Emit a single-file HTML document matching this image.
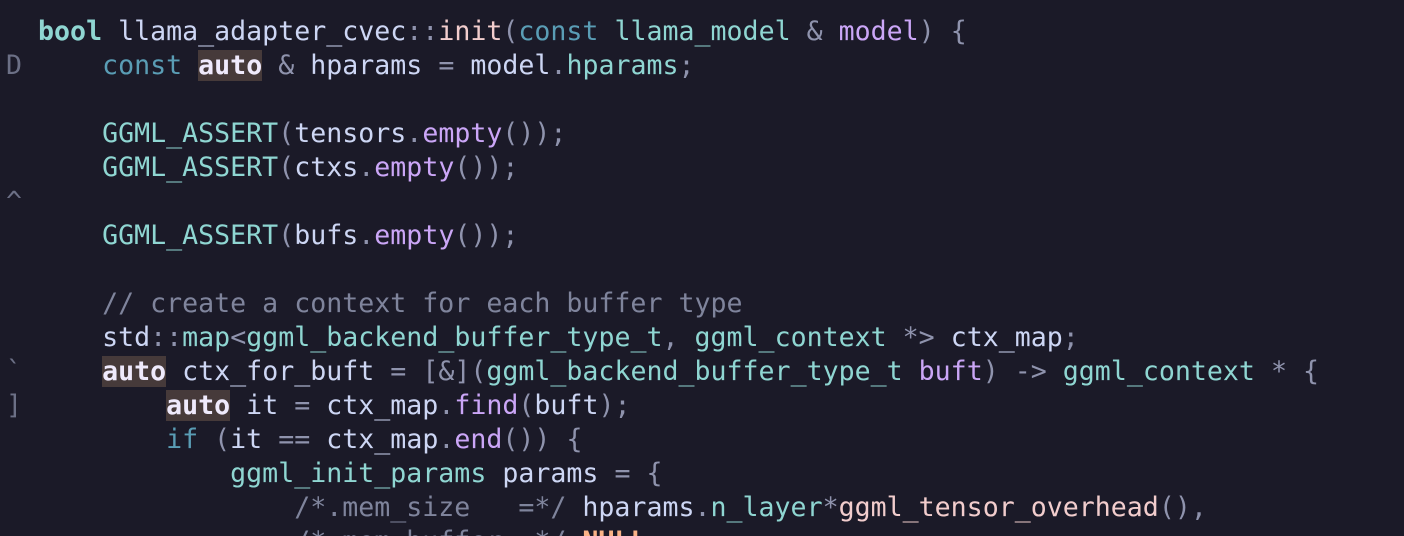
<!DOCTYPE html>
<html style="overflow:hidden"><head><meta charset="utf-8"><style>
html,body{margin:0;background:#1b1a28;width:1404px;height:536px;overflow:hidden}
pre{margin:0;padding:15px 0 0 6px;font-family:"DejaVu Sans Mono","Liberation Mono",monospace;font-size:26.6px;line-height:34px;color:#cdd6f4;white-space:pre}
.g{color:#6c7086}.k{color:#8fd6d2;font-weight:bold}.c{color:#5a9db5}.t{color:#8fd6d2}.f{color:#f2cdcd}
.m{color:#cba6f7}.o{color:#8f93ad}.cm{color:#7f849c}.n{color:#fab387;font-weight:bold}
.a{background:#463a3a;color:#efeafc;font-weight:bold}.p{color:#cba6f7}
</style></head><body><pre>  <span class="k">bool</span> llama_adapter_cvec<span class="o">::</span><span class="f">init</span><span class="o">(</span><span class="c">const</span> <span class="t">llama_model</span> <span class="o">&amp;</span> <span class="p">model</span><span class="o">)</span> <span class="o">{</span>
<span class="g">D</span>     <span class="c">const</span> <span class="a">auto</span> <span class="o">&amp;</span> hparams <span class="o">=</span> model<span class="o">.</span><span class="t">hparams</span><span class="o">;</span>

      <span class="t">GGML_ASSERT</span><span class="o">(</span>tensors<span class="o">.</span><span class="m">empty</span><span class="o">());</span>
      <span class="t">GGML_ASSERT</span><span class="o">(</span>ctxs<span class="o">.</span><span class="m">empty</span><span class="o">());</span>
<span class="g">^</span>
      <span class="t">GGML_ASSERT</span><span class="o">(</span>bufs<span class="o">.</span><span class="m">empty</span><span class="o">());</span>

      <span class="cm">// create a context for each buffer type</span>
      std<span class="o">::</span><span class="t">map</span><span class="o">&lt;</span><span class="t">ggml_backend_buffer_type_t</span><span class="o">,</span> <span class="t">ggml_context</span> <span class="o">*&gt;</span> ctx_map<span class="o">;</span>
<span class="g">`</span>     <span class="a">auto</span> ctx_for_buft <span class="o">=</span> <span class="o">[&amp;](</span><span class="t">ggml_backend_buffer_type_t</span> <span class="p">buft</span><span class="o">)</span> <span class="o">-&gt;</span> <span class="t">ggml_context</span> <span class="o">*</span> <span class="o">{</span>
<span class="g">]</span>         <span class="a">auto</span> it <span class="o">=</span> ctx_map<span class="o">.</span><span class="m">find</span><span class="o">(</span>buft<span class="o">);</span>
          <span class="c">if</span> <span class="o">(</span>it <span class="o">==</span> ctx_map<span class="o">.</span><span class="m">end</span><span class="o">())</span> <span class="o">{</span>
              <span class="t">ggml_init_params</span> params <span class="o">=</span> <span class="o">{</span>
                  <span class="cm">/*.mem_size   =*/</span> hparams<span class="o">.</span><span class="t">n_layer</span><span class="o">*</span><span class="f">ggml_tensor_overhead</span><span class="o">(),</span>
                  <span class="cm">/*.mem_buffer =*/</span> <span class="n">NULL</span><span class="o">,</span>
</pre></body></html>
